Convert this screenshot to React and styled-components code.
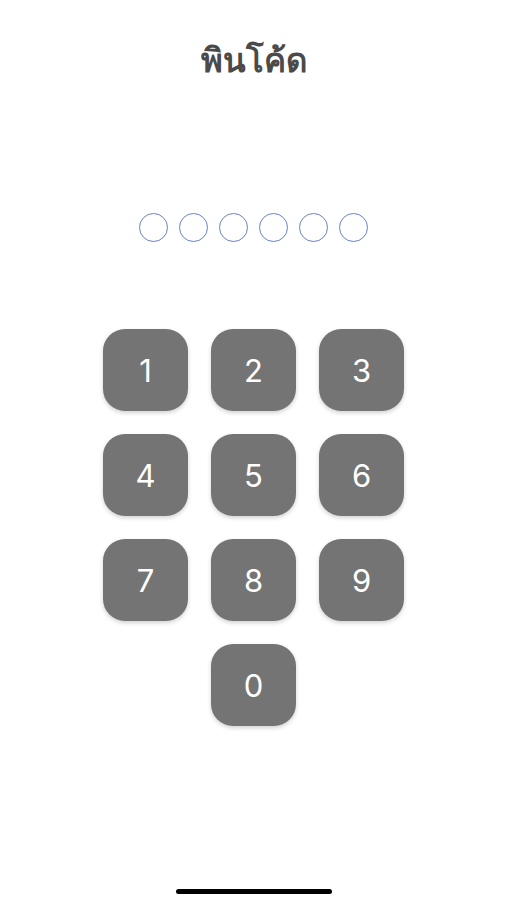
import React from 'react';
import styled, { createGlobalStyle } from 'styled-components';

const GlobalStyle = createGlobalStyle`
	html, body {
		margin: 0;
		padding: 0;
		background: #ffffff;
	}
`;

const Screen = styled.div`
	width: 507px;
	height: 900px;
	display: flex;
	flex-direction: column;
	align-items: center;
	font-family: 'Noto Sans', 'DejaVu Sans', sans-serif;
	box-sizing: border-box;
`;

const Title = styled.h1`
	margin: 0;
	padding-top: 36px;
	height: 48px;
	font-size: 33px;
	line-height: 48px;
	font-weight: 700;
	color: #4a4a4a;
`;

const Dots = styled.div`
	margin-top: 129px;
	display: flex;
	gap: 11px;
`;

const Dot = styled.div`
	width: 27px;
	height: 27px;
	border-radius: 50%;
	border: 1.5px solid #6a7fc8;
	background: ${(p) => (p.filled ? '#6a7fc8' : 'transparent')};
`;

const Keypad = styled.div`
	margin-top: 87px;
	display: grid;
	grid-template-columns: repeat(3, 85px);
	grid-auto-rows: 82px;
	column-gap: 23px;
	row-gap: 23px;
`;

const Key = styled.button`
	grid-column: ${(p) => p.col || 'auto'};
	border: none;
	border-radius: 22px;
	background: #747474;
	color: #ffffff;
	font-family: 'Inter', 'Roboto', sans-serif;
	font-size: 31px;
	font-weight: 400;
	box-shadow: 0 2px 4px rgba(0, 0, 0, 0.18);
	display: flex;
	align-items: center;
	justify-content: center;
	padding: 0;
	cursor: pointer;
`;

const Spacer = styled.div`
	flex: 1;
`;

const HomeBar = styled.div`
	width: 156px;
	height: 5px;
	border-radius: 3px;
	background: #000;
	margin-bottom: 6px;
`;

function App() {
	const entered = 0;
	const keys = ['1', '2', '3', '4', '5', '6', '7', '8', '9'];

	return (
		<Screen>
			<GlobalStyle />
			<Title>พินโค้ด</Title>
			<Dots>
				{[0, 1, 2, 3, 4, 5].map((i) => (
					<Dot key={i} filled={i < entered} />
				))}
			</Dots>
			<Keypad>
				{keys.map((k) => (
					<Key key={k}>{k}</Key>
				))}
				<Key col={2}>0</Key>
			</Keypad>
			<Spacer />
			<HomeBar />
		</Screen>
	);
}

export default App;
